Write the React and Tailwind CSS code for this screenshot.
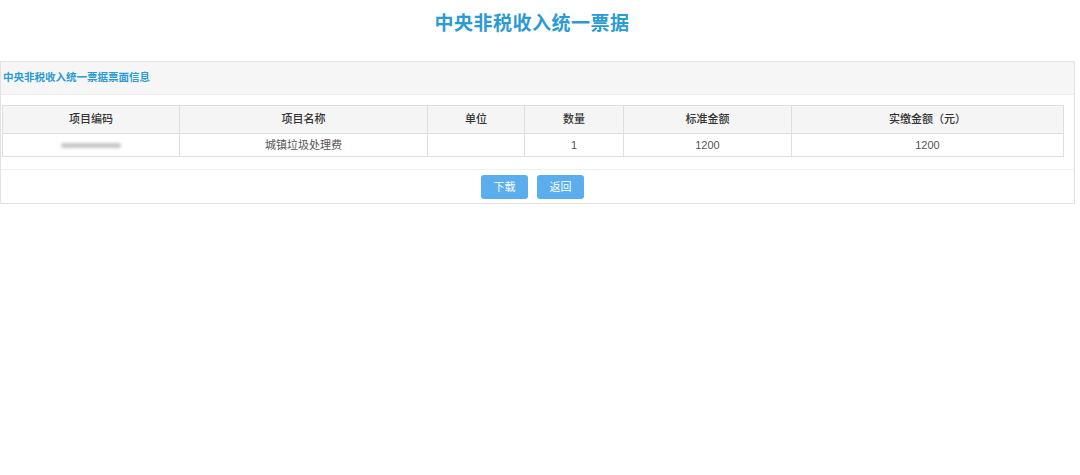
const cols = [
  { label: '项目编码', w: 'w-[177px]' },
  { label: '项目名称', w: 'w-[248px]' },
  { label: '单位', w: 'w-[97px]' },
  { label: '数量', w: 'w-[99px]' },
  { label: '标准金额', w: 'w-[168px]' },
  { label: '实缴金额（元）', w: '' },
];

const row = ['', '城镇垃圾处理费', '', '1', '1200', '1200'];

export default function App() {
  return (
    <div className="w-[1080px] h-[475px] bg-white font-['Liberation_Sans','Noto_Sans_CJK_SC',sans-serif] text-[11px] text-[#444]">
      <div className="h-[47px] flex items-center justify-center pt-[2px] pr-[16px]">
        <h1 className="text-[19px] font-bold text-[#2a9bd3] tracking-[0.5px]">中央非税收入统一票据</h1>
      </div>
      <div className="mt-[14px] w-[1075px] border border-[#e2e2e2]">
        <div className="h-[33px] bg-[#f6f6f6] border-b border-[#ececec] flex items-center px-[2px]">
          <span className="text-[10.5px] font-bold text-[#2a9bd3]">中央非税收入统一票据票面信息</span>
        </div>
        <div className="px-[1px] pt-[10px]">
          <table className="w-[1062px] border-collapse table-fixed">
            <thead>
              <tr className="bg-[#f5f5f5] h-[28px]">
                {cols.map((c) => (
                  <th key={c.label} className={`${c.w} border border-[#dedede] font-medium text-[#333] text-center`}>{c.label}</th>
                ))}
              </tr>
            </thead>
            <tbody>
              <tr className="h-[23px]">
                {row.map((v, i) => (
                  <td key={i} className="border border-[#dedede] text-center text-[#555]">
                    {i === 0 ? (
                      <span className="inline-block w-[60px] h-[5px] rounded-full bg-[#c8c8c8] blur-[1.5px] align-middle" />
                    ) : v}
                  </td>
                ))}
              </tr>
            </tbody>
          </table>
        </div>
        <div className="mt-[12px] border-t border-[#f0f0f0] flex justify-center gap-[9px] pt-[5px] pb-[4px] pr-[10px]">
          <button className="w-[47px] h-[24px] rounded-[3px] bg-[#5aaeee] text-white text-[11px]">下载</button>
          <button className="w-[47px] h-[24px] rounded-[3px] bg-[#5aaeee] text-white text-[11px]">返回</button>
        </div>
      </div>
    </div>
  );
}
